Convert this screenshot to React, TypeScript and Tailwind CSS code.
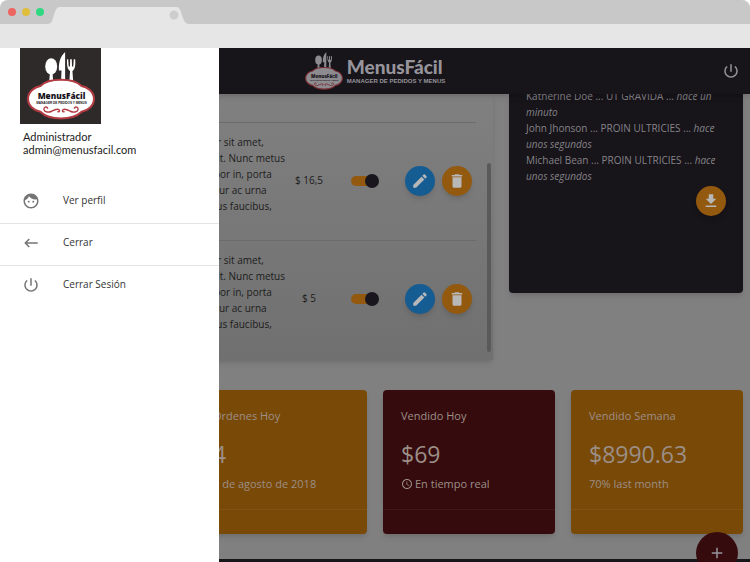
import React from "react";

const dishes = [
  { id: "a", price: "$ 16,5" },
  { id: "b", price: "$ 5" },
];

const orders = [
  { name: "Katherine Doe", dish: "UT GRAVIDA", when: "hace un minuto" },
  { name: "John Jhonson", dish: "PROIN ULTRICIES", when: "hace unos segundos" },
  { name: "Michael Bean", dish: "PROIN ULTRICIES", when: "hace unos segundos" },
];

const ICONS = {
  face: "M9 11.75c-.69 0-1.25.56-1.25 1.25s.56 1.25 1.25 1.25 1.25-.56 1.25-1.25-.56-1.25-1.25-1.25zm6 0c-.69 0-1.25.56-1.25 1.25s.56 1.25 1.25 1.25 1.25-.56 1.25-1.25-.56-1.25-1.25-1.25zM12 2C6.48 2 2 6.48 2 12s4.48 10 10 10 10-4.48 10-10S17.52 2 12 2zm0 18c-4.41 0-8-3.59-8-8 0-.29.02-.58.05-.86 2.36-1.05 4.23-2.98 5.21-5.37C11.07 8.33 14.05 10 17.42 10c.78 0 1.53-.09 2.25-.26.21.71.33 1.47.33 2.26 0 4.41-3.59 8-8 8z",
  back: "M21 11H6.83l3.58-3.59L9 6l-6 6 6 6 1.41-1.41L6.83 13H21z",
  power: "M13 3h-2v10h2V3zm4.83 2.17l-1.42 1.42C17.99 7.86 19 9.81 19 12c0 3.87-3.13 7-7 7s-7-3.13-7-7c0-2.19 1.01-4.14 2.58-5.42L6.17 5.17C4.23 6.82 3 9.26 3 12c0 4.97 4.03 9 9 9s9-4.03 9-9c0-2.74-1.23-5.18-3.17-6.83z",
  edit: "M3 17.25V21h3.75L17.81 9.94l-3.75-3.75L3 17.25zM20.71 7.04c.39-.39.39-1.02 0-1.41l-2.34-2.34c-.39-.39-1.02-.39-1.41 0l-1.83 1.83 3.75 3.75 1.83-1.83z",
  trash: "M6 19c0 1.1.9 2 2 2h8c1.1 0 2-.9 2-2V7H6v12zM19 4h-3.5l-1-1h-5l-1 1H5v2h14V4z",
  download: "M19 9h-4V3H9v6H5l7 7 7-7zM5 18v2h14v-2H5z",
  plus: "M19 13h-6v6h-2v-6H5v-2h6V5h2v6h6v2z",
  clock: "M11.99 2C6.47 2 2 6.48 2 12s4.47 10 9.99 10C17.52 22 22 17.52 22 12S17.52 2 11.99 2zM12 20c-4.42 0-8-3.58-8-8s3.58-8 8-8 8 3.58 8 8-3.58 8-8 8zm.5-13H11v6l5.25 3.15.75-1.23-4.5-2.67z",
};

function Icon({ name, className }: { name: keyof typeof ICONS; className: string }) {
  return (
    <svg viewBox="0 0 24 24" fill="currentColor" aria-hidden="true" className={className}>
      <path d={ICONS[name]} />
    </svg>
  );
}

function Emblem({ className, dim }: { className: string; dim?: boolean }) {
  const white = dim ? "#8d8b8f" : "#ffffff";
  const red = dim ? "#792b32" : "#b23b42";
  return (
    <svg viewBox="0 0 66 66" className={className} aria-hidden="true">
      <g fill={white}>
        <ellipse cx="23.500" cy="14" rx="5.800" ry="8" />
        <path d="M22.300 20h2.400l.8 9h-4z" />
        <path d="M37 0c-4.500 4-6.500 10-6 18h2.500l-.5 11h4z" />
        <path d="M38.700 7h1.300l.5 7h1.200l.2-7h1.600l.2 7h1.200l.5-7h1.300c.6 5 0 10-2.600 11.500l.7 10h-3.700l.7-10c-2.700-1.500-3.300-6.500-2.900-11.500z" />
      </g>
      <path
        d="M33 27c9 0 16 2 20 6 6 1 12 6 12 12.500S59 57 53 58c-4 4-11 6.500-20 6.500S17 62 13 58C7 57 1 52 1 45.500S7 34 13 33c4-4 11-6 20-6z"
        fill={white}
        stroke={red}
        strokeWidth="2"
      />
      <text x="33.500" y="46" textAnchor="middle" fontFamily="Noto Sans, sans-serif" fontWeight="900" fontSize="8" fill="#17131a">
        MenusFácil
      </text>
      <text x="33.500" y="50" textAnchor="middle" fontFamily="Liberation Sans, sans-serif" fontWeight="700" fontSize="3" fill="#17131a">
        MANAGER DE PEDIDOS Y MENUS
      </text>
      <path
        d="M20 54.500c-1-2-4-1-3.500 1.500.6 2.500 4.500 3 7.500 1.500 3-1.700 5-3 7-1.500 1.200 1 .5 2.500-1 2M46 54.500c1-2 4-1 3.500 1.500-.6 2.500-4.500 3-7.500 1.500-3-1.700-5-3-7-1.500-1.200 1-.5 2.500 1 2"
        fill="none"
        stroke={red}
        strokeWidth="1.400"
        strokeLinecap="round"
      />
    </svg>
  );
}

function BrowserBar() {
  return (
    <div className="h-12 shrink-0 overflow-hidden rounded-t-lg bg-[#e6e6e6]">
      <div className="flex h-6 items-center bg-[#c8c8c8]">
        <div className="flex w-12 shrink-0 gap-1.5 pl-2">
          <i className="size-2 rounded-full bg-[#ed6560]" />
          <i className="size-2 rounded-full bg-[#e0bd3c]" />
          <i className="size-2 rounded-full bg-[#2dd881]" />
        </div>
        <svg viewBox="0 0 142 24" className="h-6 w-[142px]" aria-hidden="true">
          <path d="M0 24c3 0 4-3 5-6l2-6c1-3 2-5 5-5h116c3 0 4 2 5 5l2 6c1 3 3 6 6 6z" fill="#e6e6e6" />
          <circle cx="126" cy="15" r="4.500" fill="#cdcdcd" />
        </svg>
      </div>
    </div>
  );
}

function RoundButton({ label, className, icon }: { label: string; className: string; icon: keyof typeof ICONS }) {
  return (
    <button
      aria-label={label}
      className={"flex size-[30px] shrink-0 items-center justify-center rounded-full text-[#b8b8b8] shadow-md " + className}
    >
      <Icon name={icon} className="size-[18px]" />
    </button>
  );
}

function DishRow({ price }: { price: string }) {
  return (
    <div className="flex h-[118px] items-center border-t border-[#6b6b6b] pr-1 pb-0.5">
      <p className="pb-3.5 text-[10px] leading-4 whitespace-nowrap">
        Lorem ipsum dolor sit amet,
        <br />
        consectetur sed elit. Nunc metus
        <br />
        ligula sapien, tempor in, porta
        <br />
        vitae mi, consectetur ac urna
        <br />
        sed dui nisl, dapibus faucibus,
      </p>
      <span className="w-12 text-center text-[10px]">{price}</span>
      <label className="relative ml-[18px] flex h-4 w-7 items-center">
        <input type="checkbox" defaultChecked aria-label="Disponible" className="absolute size-full opacity-0" />
        <span className="h-2.5 w-6 rounded-full bg-[#93590f]" />
        <span className="absolute right-0 size-[14px] rounded-full bg-[#19161d]" />
      </label>
      <div className="ml-[26px] flex gap-[7px]">
        <RoundButton label="Editar" icon="edit" className="bg-[#155c93]" />
        <RoundButton label="Eliminar" icon="trash" className="bg-[#93590f]" />
      </div>
    </div>
  );
}

function StatCard({ title, value, className, children }: { title: string; value: string; className: string; children: React.ReactNode }) {
  return (
    <section className={"h-36 w-[172px] shrink-0 rounded-sm text-[#9b8f86] shadow-md " + className}>
      <div className="h-[120px] border-b border-white/5 px-[18px] pt-[18px]">
        <h2 className="text-[11px] leading-4">{title}</h2>
        <p className="mt-3.5 text-[23px] leading-8">{value}</p>
        <p className="mt-1.5 flex items-center gap-0.5 text-[11px] leading-4">{children}</p>
      </div>
    </section>
  );
}

function Drawer() {
  const items: { icon: keyof typeof ICONS; label: string }[] = [
    { icon: "face", label: "Ver perfil" },
    { icon: "back", label: "Cerrar" },
    { icon: "power", label: "Cerrar Sesión" },
  ];
  return (
    <aside className="absolute inset-y-0 left-0 z-20 w-[219px] bg-white text-[#333]">
      <div className="ml-5 flex h-[76px] w-[81px] items-start justify-center bg-[#2e2a2a] pt-1">
        <Emblem className="size-[68px]" />
      </div>
      <div className="pt-1.5 pl-[23px] font-[Lato,sans-serif] text-[11px] leading-[13px] text-[#222]">
        <p>Administrador</p>
        <p>admin@menusfacil.com</p>
      </div>
      <nav className="mt-[26px]">
        {items.map((item) => (
          <a
            key={item.label}
            href="#"
            className="flex h-[42px] items-center gap-[23px] border-b border-[#e4e4e4] pb-1 pl-[22px] text-[10px] last:border-transparent"
          >
            <Icon name={item.icon} className="size-[18px] text-[#757575]" />
            {item.label}
          </a>
        ))}
      </nav>
    </aside>
  );
}

export default function App() {
  return (
    <div className="flex h-screen flex-col overflow-hidden bg-white font-['Open_Sans',sans-serif]">
      <BrowserBar />
      <div className="relative flex min-h-0 flex-1 flex-col overflow-hidden bg-[#808080] text-[#1c1c1c]">
        <header className="z-10 grid h-[46px] shrink-0 grid-cols-[1fr_auto_1fr] items-center bg-[#17141a] px-[10px] shadow-md">
          <div className="col-start-2 flex items-center justify-center gap-1 text-[#96949a]">
            <Emblem dim className="size-[38px]" />
            <div>
              <p className="font-[Lato,sans-serif] text-[19px] leading-5 font-black">MenusFácil</p>
              <p className="font-['Liberation_Sans',sans-serif] text-[6px] leading-2 font-bold">MANAGER DE PEDIDOS Y MENUS</p>
            </div>
          </div>
          <button aria-label="Salir" className="justify-self-end text-[#96949a]">
            <Icon name="power" className="size-[18px]" />
          </button>
        </header>

        <main className="flex flex-col gap-[30px] pr-[7px]">
          <div className="flex items-start justify-end gap-4">
            <section className="flex h-[266px] flex-1 justify-end bg-linear-to-b from-[#808080] to-[#707070] pt-7 pr-0.5 shadow-md">
              <div className="pr-[11px]">
                {dishes.map((dish) => (
                  <DishRow key={dish.id} price={dish.price} />
                ))}
              </div>
              <div className="mt-[41px] mb-2 w-1 rounded-full bg-[#5a5a5a]" />
            </section>
            <section className="h-[199px] w-[234px] shrink-0 rounded-b-sm bg-[#17141a] px-[17px] text-[10px] leading-4 text-[#858387] shadow-md">
              <ul className="-mt-1.5">
                {orders.map((order) => (
                  <li key={order.name}>
                    {`${order.name} ... ${order.dish} ... `}
                    <em>{order.when}</em>
                  </li>
                ))}
              </ul>
              <div className="mt-0.5 flex justify-end">
                <RoundButton label="Descargar" icon="download" className="bg-[#93590f]" />
              </div>
            </section>
          </div>
          <div className="flex justify-end gap-4">
            <StatCard title="Ordenes Hoy" value="4" className="bg-[#794908]">
              9 de agosto de 2018
            </StatCard>
            <StatCard title="Vendido Hoy" value="$69" className="bg-[#360b0e]">
              <Icon name="clock" className="size-3" />
              En tiempo real
            </StatCard>
            <StatCard title="Vendido Semana" value="$8990.63" className="bg-[#794908]">
              70% last month
            </StatCard>
          </div>
        </main>
        <footer className="mt-auto h-[3px] bg-[#15151a]" />
        <button
          aria-label="Agregar"
          className="absolute right-3 -bottom-3 flex size-[42px] items-center justify-center rounded-full bg-[#360b0e] text-[#96949a]"
        >
          <Icon name="plus" className="size-[18px]" />
        </button>
        <Drawer />
      </div>
    </div>
  );
}
